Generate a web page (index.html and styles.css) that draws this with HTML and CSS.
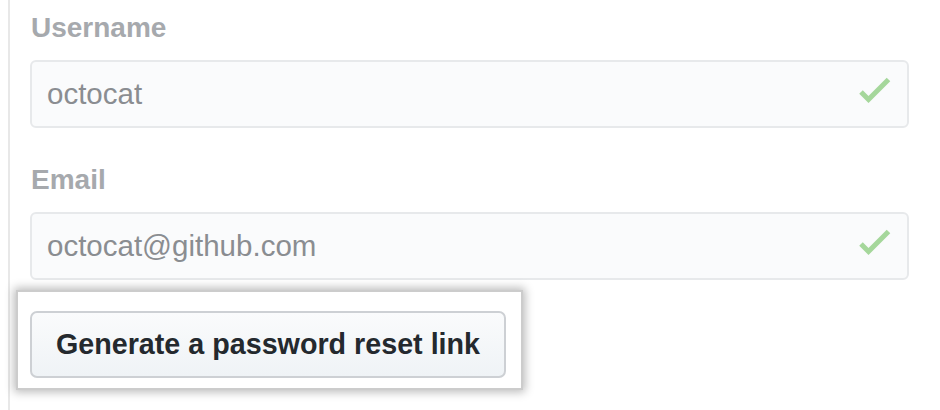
FILE: index.html
```html
<!DOCTYPE html>
<html lang="en">
<head>
<meta charset="utf-8">
<title>Reset password</title>
<link rel="stylesheet" href="styles.css">
</head>
<body>
<div class="page">
  <div class="content">
    <div class="field">
      <label class="label">Username</label>
      <div class="input">
        <span class="value">octocat</span>
        <svg class="check" width="32" height="24" viewBox="0 0 32 24"><polyline points="2,11 9.5,18.5 29.5,-1.5" fill="none" stroke="#a5d79b" stroke-width="5" stroke-miterlimit="10"/></svg>
      </div>
    </div>
    <div class="field field-second">
      <label class="label">Email</label>
      <div class="input">
        <span class="value">octocat@github.com</span>
        <svg class="check" width="32" height="24" viewBox="0 0 32 24"><polyline points="2,11 9.5,18.5 29.5,-1.5" fill="none" stroke="#a5d79b" stroke-width="5" stroke-miterlimit="10"/></svg>
      </div>
    </div>
    <div class="highlight">
      <button class="btn" type="button">Generate a password reset link</button>
    </div>
  </div>
</div>
</body>
</html>
```

FILE: styles.css
```css
html, body {
  margin: 0;
  padding: 0;
  background: #ffffff;
}

body {
  font-family: "Liberation Sans", Arial, sans-serif;
  width: 940px;
  height: 410px;
  overflow: hidden;
}

.page {
  margin-left: 8px;
  border-left: 2px solid #e8e8e8;
  height: 410px;
  box-sizing: border-box;
  padding: 10px 31px 0 20px;
}

.content {
  display: flex;
  flex-direction: column;
}

.field {
  display: flex;
  flex-direction: column;
  gap: 14px;
}

.field-second {
  margin-top: 34px;
}

.label {
  display: block;
  font-size: 28px;
  line-height: 36px;
  font-weight: bold;
  color: #a6a9ad;
  padding-left: 1px;
}

.input {
  height: 68px;
  box-sizing: border-box;
  border: 2px solid #e7e9eb;
  border-radius: 6px;
  background: #fafbfc;
  display: flex;
  align-items: center;
  justify-content: space-between;
  padding: 0 16px 0 15px;
}

.value {
  font-size: 29.5px;
  line-height: 36px;
  color: #8a8d91;
}

.check {
  display: block;
  overflow: visible;
  margin-top: -2px;
}

.highlight {
  margin-top: 10px;
  margin-left: -14px;
  width: 507px;
  height: 100px;
  box-sizing: border-box;
  border: 2px solid #cccccc;
  background: #ffffff;
  box-shadow: 0 0 9px 2px rgba(0, 0, 0, 0.28);
  padding: 19px 0 0 12px;
}

.btn {
  display: flex;
  align-items: center;
  justify-content: center;
  width: 476px;
  height: 67px;
  box-sizing: border-box;
  border: 2px solid #cdd0d4;
  border-radius: 7px;
  background: linear-gradient(#fafbfc, #eff3f6);
  font-family: "Liberation Sans", Arial, sans-serif;
  font-size: 28.7px;
  font-weight: bold;
  color: #24292e;
  padding: 0;
}
```
